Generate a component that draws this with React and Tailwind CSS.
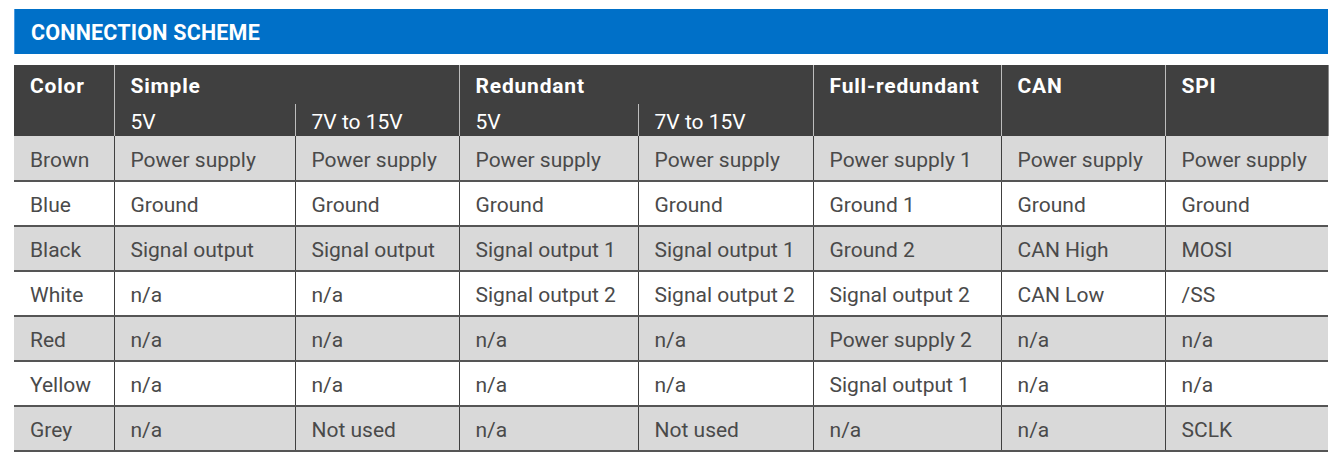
import React from 'react';

const rows = [
  ['Brown', 'Power supply', 'Power supply', 'Power supply', 'Power supply', 'Power supply 1', 'Power supply', 'Power supply'],
  ['Blue', 'Ground', 'Ground', 'Ground', 'Ground', 'Ground 1', 'Ground', 'Ground'],
  ['Black', 'Signal output', 'Signal output', 'Signal output 1', 'Signal output 1', 'Ground 2', 'CAN High', 'MOSI'],
  ['White', 'n/a', 'n/a', 'Signal output 2', 'Signal output 2', 'Signal output 2', 'CAN Low', '/SS'],
  ['Red', 'n/a', 'n/a', 'n/a', 'n/a', 'Power supply 2', 'n/a', 'n/a'],
  ['Yellow', 'n/a', 'n/a', 'n/a', 'n/a', 'Signal output 1', 'n/a', 'n/a'],
  ['Grey', 'n/a', 'Not used', 'n/a', 'Not used', 'n/a', 'n/a', 'SCLK'],
];

const widths = ['w-[100px]', 'w-[181px]', 'w-[164px]', 'w-[179px]', 'w-[175px]', 'w-[188px]', 'w-[164px]', 'w-[163px]'];

const App = () => {
  return (
    <div className="bg-white min-h-screen pt-[9px] pl-[14px] font-['Roboto',sans-serif]">
      <div className="w-[1314px]">
        <div className="h-[45px] bg-[#0070c8] border-l border-[#4a9ae0] flex items-center pl-4 pt-[3px]">
          <h2 className="text-white font-bold text-[21.5px] tracking-[0.2px]">CONNECTION SCHEME</h2>
        </div>

        <table className="mt-[11px] w-[1314px] table-fixed border-collapse text-[21px] leading-[26px]">
          <colgroup>
            {widths.map((w, i) => (
              <col key={i} className={w} />
            ))}
          </colgroup>
          <thead className="bg-[#404040] text-white">
            <tr className="h-[39px]">
              <th rowSpan={2} className="text-left align-top pt-[8px] pl-4 font-bold tracking-[0.8px] border-r border-[#bdbdbd]">Color</th>
              <th colSpan={2} className="text-left align-top pt-[8px] pl-4 font-bold tracking-[0.8px] border-r border-[#bdbdbd]">Simple</th>
              <th colSpan={2} className="text-left align-top pt-[8px] pl-4 font-bold tracking-[0.8px] border-r border-[#bdbdbd]">Redundant</th>
              <th className="text-left align-top pt-[8px] pl-4 font-bold tracking-[0.8px] border-r border-[#bdbdbd]">Full-redundant</th>
              <th className="text-left align-top pt-[8px] pl-4 font-bold tracking-[0.8px] border-r border-[#bdbdbd]">CAN</th>
              <th className="text-left align-top pt-[8px] pl-4 font-bold tracking-[0.8px] border-r border-[#8a8a8a]">SPI</th>
            </tr>
            <tr className="h-[32px]">
              <th className="text-left pl-4 pt-[3px] font-normal border-r border-[#bdbdbd]">5V</th>
              <th className="text-left pl-4 pt-[3px] font-normal border-r border-[#bdbdbd]">7V to 15V</th>
              <th className="text-left pl-4 pt-[3px] font-normal border-r border-[#bdbdbd]">5V</th>
              <th className="text-left pl-4 pt-[3px] font-normal border-r border-[#bdbdbd]">7V to 15V</th>
              <th className="border-r border-[#bdbdbd]"></th>
              <th className="border-r border-[#bdbdbd]"></th>
              <th className="border-r border-[#8a8a8a]"></th>
            </tr>
          </thead>
          <tbody className="text-[#4a4a4a]">
            {rows.map((row, r) => (
              <tr key={r} className={`h-[45px] border-b-2 border-[#555555] ${r % 2 === 0 ? 'bg-[#d9d9d9]' : 'bg-white'}`}>
                {row.map((cell, c) => (
                  <td key={c} className={`pl-4 pt-[3px] text-left ${c < 7 ? 'border-r border-[#404040]' : ''}`}>
                    {cell}
                  </td>
                ))}
              </tr>
            ))}
          </tbody>
        </table>
      </div>
    </div>
  );
};

export default App;
